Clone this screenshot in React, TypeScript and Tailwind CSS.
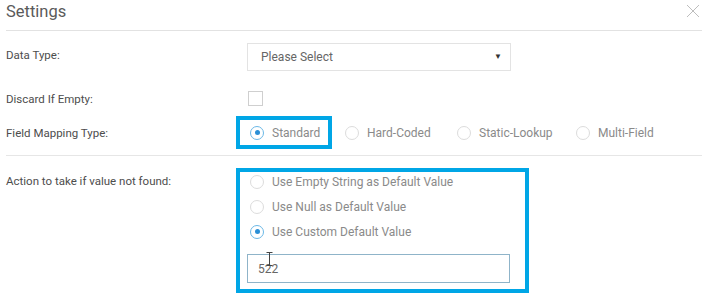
import React, { useState } from 'react';

const Radio = ({ checked }: { checked?: boolean }) => (
  <span
    className={`flex h-[14px] w-[14px] shrink-0 items-center justify-center rounded-full border ${
      checked ? 'border-[#6bb8e6]' : 'border-[#dcdcdc]'
    } bg-white`}
  >
    {checked && <span className="h-[5px] w-[5px] rounded-full bg-[#2a8fd6]" />}
  </span>
);

const RadioOption = ({ label, checked, className = '' }: { label: string; checked?: boolean; className?: string }) => (
  <div className={`flex items-center gap-[8px] ${className}`}>
    <Radio checked={checked} />
    <span className="text-[12px] text-[#8a8a8a]">{label}</span>
  </div>
);

const App: React.FC = () => {
  const [value, setValue] = useState('522');

  return (
    <div className="h-[307px] w-[708px] overflow-hidden bg-white px-[6px] font-['Roboto',sans-serif]">
      <header className="flex h-[31px] items-center justify-between border-b border-[#e2e2e2]">
        <h1 className="-mt-[5px] text-[16.5px] text-[#5a5a5a]">Settings</h1>
        <svg className="-mt-[8px] mr-[2px] h-[14px] w-[14px]" viewBox="0 0 14 14" fill="none" stroke="#bdbdbd" strokeWidth="1">
          <path d="M1 1L13 13M13 1L1 13" />
        </svg>
      </header>

      <div className="mt-[12px] flex">
        <label className="w-[230px] pt-[5px] text-[11.5px] leading-[14px] text-[#4d4d4d]">Data Type:</label>
        <div className="ml-[11px] flex h-[28px] w-[264px] items-center justify-between border border-[#e3e3e3] pl-[13px] pr-[8px]">
          <span className="text-[12px] text-[#666]">Please Select</span>
          <span className="text-[8px] text-[#333]">▼</span>
        </div>
      </div>

      <div className="mt-[20px] flex items-center">
        <label className="w-[230px] text-[11.5px] leading-[14px] text-[#4d4d4d]">Discard If Empty:</label>
        <span className="ml-[12px] h-[15px] w-[15px] border border-[#cfcfcf]" />
      </div>

      <div className="mt-[10px] flex items-center">
        <label className="w-[230px] text-[11.5px] leading-[14px] text-[#4d4d4d]">Field Mapping Type:</label>
        <div className="flex h-[33px] w-[96px] items-center border-4 border-[#00a6e6] pl-[10px]">
          <RadioOption label="Standard" checked />
        </div>
        <RadioOption label="Hard-Coded" className="ml-[13px] w-[112px]" />
        <RadioOption label="Static-Lookup" className="w-[119px]" />
        <RadioOption label="Multi-Field" />
      </div>

      <div className="mt-[6px] border-b border-[#e6e6e6]" />

      <div className="mt-[12px] flex items-start">
        <label className="w-[230px] pt-[6px] text-[11.5px] leading-[14px] text-[#4d4d4d]">Action to take if value not found:</label>
        <div className="flex w-[293px] flex-col border-4 border-[#00a6e6] pb-[6px] pl-[10px]">
          <div className="-mt-[3px] flex h-[25px] items-center">
            <RadioOption label="Use Empty String as Default Value" />
          </div>
          <div className="flex h-[25px] items-center">
            <RadioOption label="Use Null as Default Value" />
          </div>
          <div className="flex h-[25px] items-center">
            <RadioOption label="Use Custom Default Value" checked />
          </div>
          <div className="relative -ml-[3px] mt-[10px] w-[263px]">
            <input
              value={value}
              onChange={(e) => setValue(e.target.value)}
              className="h-[29px] w-full border border-[#8fb4c9] px-[10px] text-[12px] text-[#666] outline-none"
            />
            <svg className="pointer-events-none absolute left-[19px] -top-[2px] h-[14px] w-[7px]" viewBox="0 0 7 14" fill="none" stroke="#444" strokeWidth="1">
              <path d="M0.5 0.5H6.5M3.5 0.5V13.5M0.5 13.5H6.5" />
            </svg>
          </div>
        </div>
      </div>
    </div>
  );
};

export default App;
